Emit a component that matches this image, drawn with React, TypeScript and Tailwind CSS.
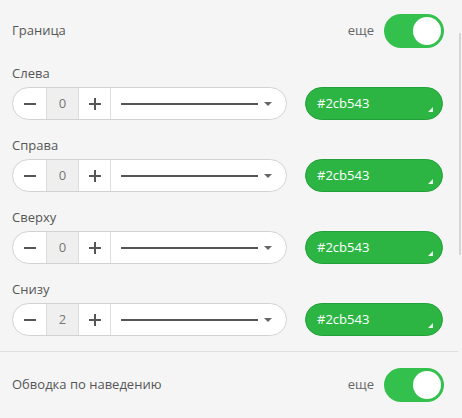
import React from 'react';

function Toggle() {
  return (
    <div className="w-[60px] h-[34px] rounded-full bg-[#34c04c] p-[3px] flex justify-end">
      <div className="w-[28px] h-[28px] rounded-full bg-white" />
    </div>
  );
}

function SideRow({ label, value }: { label: string; value: number }) {
  return (
    <div className="flex flex-col">
      <div className="h-[20px] leading-[20px] text-[13px] text-[#555]">{label}</div>
      <div className="mt-[4px] flex items-center h-[33px]">
        <div className="w-[275px] h-[33px] flex rounded-full border border-[#d2d2d2] bg-white overflow-hidden">
          <div className="w-[33px] flex items-center justify-center">
            <div className="w-[12px] h-[2px] bg-[#555]" />
          </div>
          <div className="w-[33px] flex items-center justify-center bg-[#efefef] border-l border-r border-[#dcdcdc] text-[13px] text-[#777]">
            {value}
          </div>
          <div className="w-[32px] flex items-center justify-center relative border-r border-[#dcdcdc]">
            <div className="w-[12px] h-[2px] bg-[#555]" />
            <div className="absolute w-[2px] h-[12px] bg-[#555]" />
          </div>
          <div className="flex-1 flex items-center pl-[10px] pr-[14px]">
            <div className="flex-1 h-[2px] bg-[#555]" />
            <div className="ml-[6px] w-0 h-0 border-l-[4px] border-r-[4px] border-t-[4px] border-l-transparent border-r-transparent border-t-[#666]" />
          </div>
        </div>
        <div className="ml-[18px] w-[138px] h-[33px] rounded-full bg-[#2cb543] border border-[#24a03a] flex items-center pl-[11px] relative">
          <span className="text-[13px] text-white">#2cb543</span>
          <div className="absolute right-[9px] bottom-[7px] w-0 h-0 [border-bottom:5px_solid_#e8f5ea] [border-left:5px_solid_transparent]" />
        </div>
      </div>
    </div>
  );
}

export default function App() {
  const rows = [
    { label: 'Слева', value: 0 },
    { label: 'Справа', value: 0 },
    { label: 'Сверху', value: 0 },
    { label: 'Снизу', value: 2 },
  ];

  return (
    <div className="w-[462px] h-[418px] bg-[#f5f5f5] relative overflow-hidden" style={{ fontFamily: '"Open Sans", "Noto Sans", sans-serif' }}>
      {/* Border section */}
      <div className="flex items-center justify-between pl-[12px] pr-[18px] pt-[14px]">
        <span className="text-[13px] text-[#555]">Граница</span>
        <div className="flex items-center gap-[10px]">
          <span className="text-[13px] text-[#666]">еще</span>
          <Toggle />
        </div>
      </div>

      <div className="pl-[12px] pt-[15px] flex flex-col gap-[15px]">
        {rows.map((r) => (
          <SideRow key={r.label} label={r.label} value={r.value} />
        ))}
      </div>

      <div className="mt-[15px] h-px bg-[#dedede] mr-[4px]" />

      {/* Hover outline */}
      <div className="flex items-center justify-between pl-[12px] pr-[18px] pt-[16px]">
        <span className="text-[13px] text-[#555]">Обводка по наведению</span>
        <div className="flex items-center gap-[10px]">
          <span className="text-[13px] text-[#666]">еще</span>
          <Toggle />
        </div>
      </div>

      {/* scrollbar */}
      <div className="absolute right-[1px] top-[33px] w-[2px] h-[222px] bg-[#d6d6d6] rounded-full" />
    </div>
  );
}
